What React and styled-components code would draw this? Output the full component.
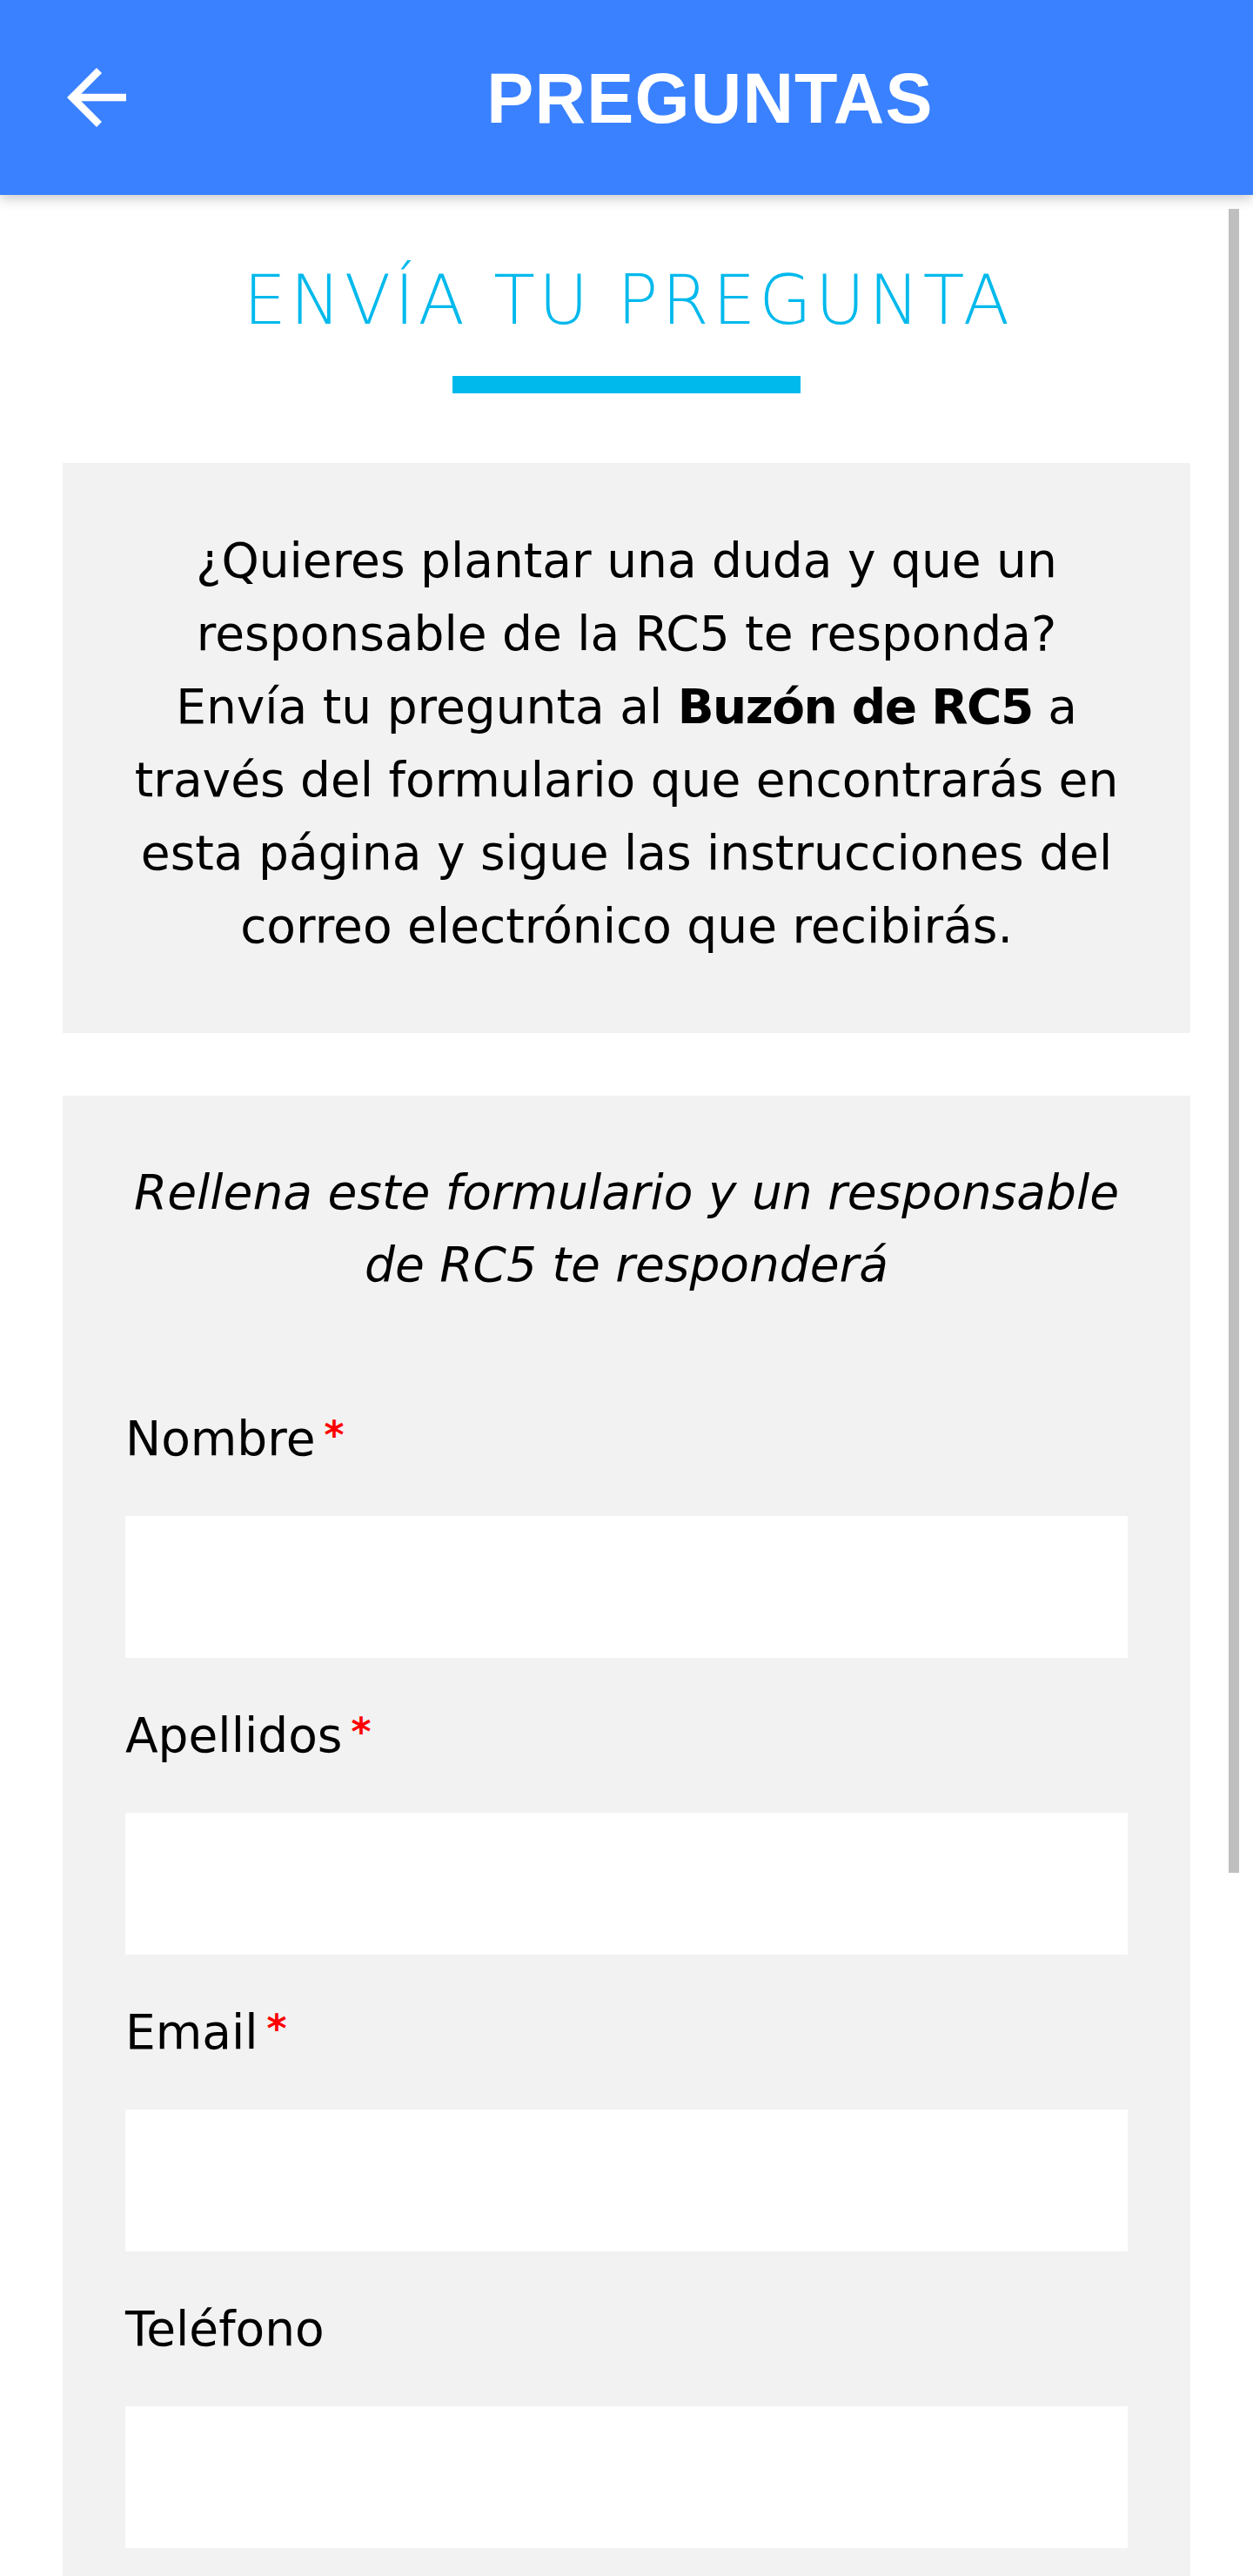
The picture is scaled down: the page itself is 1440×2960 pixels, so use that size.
import React from "react";
import styled, { createGlobalStyle } from "styled-components";

const GlobalStyle = createGlobalStyle`
    body {
        margin: 0;
        background: #ffffff;
        font-family: "DejaVu Sans", "Open Sans", sans-serif;
        color: #000000;
    }
`;

const Page = styled.div`
    position: relative;
    width: 1440px;
    min-height: 2960px;
    overflow: hidden;
    background: #ffffff;
`;

const Header = styled.header`
    position: relative;
    z-index: 2;
    height: 224px;
    display: flex;
    align-items: center;
    background-color: #3a81ff;
    box-shadow: 0 4px 14px rgba(0, 0, 0, 0.22);
`;

const BackButton = styled.button`
    width: 192px;
    height: 100%;
    display: flex;
    align-items: center;
    padding: 0 0 0 60px;
    border: none;
    background: transparent;
    cursor: pointer;
`;

const HeaderTitle = styled.h1`
    flex: 1;
    margin: 0;
    text-align: center;
    color: #ffffff;
    font-family: "Liberation Sans", Arial, sans-serif;
    font-weight: 700;
    font-size: 81px;
    line-height: 1;
    letter-spacing: 1.2px;
    padding-top: 2px;
`;

const ScrollThumb = styled.div`
    position: absolute;
    top: 240px;
    right: 16px;
    width: 12px;
    height: 1912px;
    background-color: #bfbfbf;
    z-index: 3;
`;

const Content = styled.main`
    padding: 0 72px;
`;

const SectionTitle = styled.h2`
    margin: 74px 0 0;
    padding-left: 4px;
    text-align: center;
    color: #00b9ec;
    font-weight: 200;
    font-size: 78px;
    line-height: 94px;
    letter-spacing: 4.2px;
`;

const TitleBar = styled.div`
    width: 400px;
    height: 20px;
    margin: 40px auto 0;
    background-color: #00b9ec;
`;

const GreyBox = styled.section`
    margin-top: ${(p) => p.$top}px;
    padding: ${(p) => p.$pad};
    background-color: #f2f2f2;
`;

const Intro = styled.p`
    margin: 0;
    text-align: center;
    font-size: 55px;
    line-height: 84px;
    font-weight: 400;

    strong {
        font-weight: 700;
        letter-spacing: -1.5px;
    }
`;

const FormIntro = styled.p`
    margin: 0 0 116px;
    text-align: center;
    font-style: italic;
    font-size: 55px;
    line-height: 83px;
`;

const Field = styled.div`
    display: flex;
    flex-direction: column;
    margin-bottom: 47px;
`;

const Label = styled.label`
    font-size: 55px;
    line-height: 84px;
    height: 84px;
    margin-bottom: 47px;
`;

const Required = styled.span`
    color: #ff0000;
    font-weight: 700;
    font-size: 44px;
    line-height: 0;
    margin-left: 10px;
    vertical-align: 8px;
`;

const Input = styled.input`
    height: 163px;
    box-sizing: border-box;
    border: none;
    background: #ffffff;
    padding: 0 30px;
    font-size: 55px;
    font-family: inherit;

    &:focus {
        outline: none;
    }
`;

const fields = [
    { id: "nombre", label: "Nombre", required: true },
    { id: "apellidos", label: "Apellidos", required: true },
    { id: "email", label: "Email", required: true },
    { id: "telefono", label: "Teléfono", required: false },
];

export default function App() {
    return (
        <Page>
            <GlobalStyle />
            <Header>
                <BackButton aria-label="Volver">
                    <svg width="102" height="102" viewBox="0 0 24 24" fill="#ffffff">
                        <path d="M20 11H7.83l5.59-5.59L12 4l-8 8 8 8 1.41-1.41L7.83 13H20v-2z" />
                    </svg>
                </BackButton>
                <HeaderTitle>PREGUNTAS</HeaderTitle>
            </Header>

            <Content>
                <SectionTitle>ENVÍA TU PREGUNTA</SectionTitle>
                <TitleBar />

                <GreyBox $top={80} $pad="70px 79px 81px">
                    <Intro>
                        ¿Quieres plantar una duda y que un responsable de la RC5 te responda? Envía tu
                        pregunta al <strong>Buzón de RC5</strong> a través del formulario que
                        encontrarás en esta página y sigue las instrucciones del correo electrónico
                        que recibirás.
                    </Intro>
                </GreyBox>

                <GreyBox $top={72} $pad="70px 72px 72px">
                    <FormIntro>
                        Rellena este formulario y un responsable de RC5 te responderá
                    </FormIntro>
                    {fields.map((f) => (
                        <Field key={f.id}>
                            <Label htmlFor={f.id}>
                                {f.label}
                                {f.required && <Required>*</Required>}
                            </Label>
                            <Input id={f.id} type="text" />
                        </Field>
                    ))}
                </GreyBox>
            </Content>

            <ScrollThumb />
        </Page>
    );
}
